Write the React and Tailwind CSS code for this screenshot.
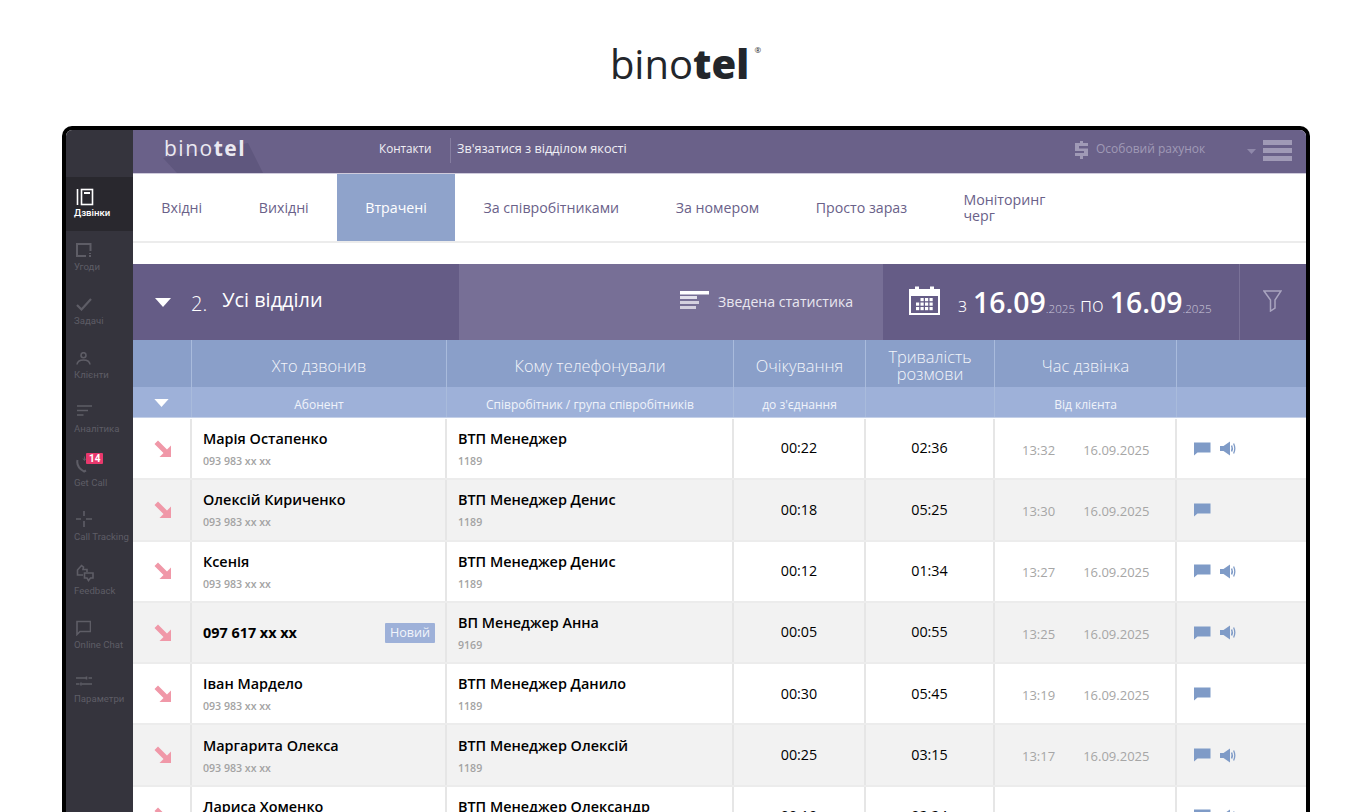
import React from "react";

const Arrow = () => (
  <svg width="18" height="18" viewBox="0 0 18 18" className="block">
    <path d="M0.5 4 L4 0.5 L13 9.5 L17 5.5 L17 17 L5.5 17 L9.5 13 Z" fill="#f098a8" />
  </svg>
);

const Chat = () => (
  <svg width="17" height="14" viewBox="0 0 17 14" className="block">
    <path d="M0 0.5 H16.5 V10.5 H3.5 L0 13.5 Z" fill="#7f9bc7" />
  </svg>
);

const Speaker = () => (
  <svg width="16" height="15" viewBox="0 0 16 15" className="block">
    <path d="M0 5 H3.5 L10 0.5 V14.5 L3.5 10 H0 Z" fill="#7f9bc7" />
    <path d="M11.6 4.5 Q13 7.5 11.6 10.5" stroke="#7f9bc7" strokeWidth="1.5" fill="none" />
    <path d="M13.6 2.5 Q16 7.5 13.6 12.5" stroke="#7f9bc7" strokeWidth="1.3" fill="none" />
  </svg>
);

const Tri = ({ w = 16, h = 9 }) => (
  <svg width={w} height={h} viewBox="0 0 16 9" className="block">
    <path d="M0 0 H16 L8 9 Z" fill="#fff" />
  </svg>
);

const S = { stroke: "#5e5d66", fill: "none", strokeWidth: 1.6 };

const navIcons = {
  calls: (
    <svg width="18" height="18" viewBox="0 0 18 18" fill="none" stroke="#fff" strokeWidth="1.6">
      <path d="M1.5 1 V17" />
      <rect x="5.5" y="1.5" width="11" height="15" />
      <path d="M8 5 H14" strokeWidth="2" />
    </svg>
  ),
  deals: (
    <svg width="16" height="14" viewBox="0 0 16 14" {...S} strokeWidth="2">
      <path d="M10 13 H1 V1 H14.5 V8" />
      <path d="M14 10 V11 M14 12 V14" />
    </svg>
  ),
  tasks: (
    <svg width="16" height="13" viewBox="0 0 16 13" {...S} strokeWidth="2.2">
      <path d="M1 7 L5.5 11.5 L15 1" />
    </svg>
  ),
  clients: (
    <svg width="15" height="13" viewBox="0 0 15 13" {...S}>
      <circle cx="7.5" cy="3.2" r="2.5" />
      <path d="M1 12.5 Q1.5 8 7.5 8 Q13.5 8 14 12.5" />
    </svg>
  ),
  analytics: (
    <svg width="16" height="12" viewBox="0 0 16 12" {...S}>
      <path d="M1 1 H16 M1 5.5 H12 M1 10 H7.5" />
    </svg>
  ),
  getcall: (
    <svg width="12" height="17" viewBox="0 0 12 17" {...S} strokeWidth="2">
      <path d="M1.5 4 Q0 11 8 15.5 L10 14.5" />
      <path d="M8.5 0.5 V4 M7 2.5 L8.5 4.5 L10 2.5" strokeWidth="1" />
    </svg>
  ),
  tracking: (
    <svg width="16" height="16" viewBox="0 0 16 16" {...S}>
      <path d="M8 0 V5 M8 10 V16 M0 8 H5 M10 8 H16" />
    </svg>
  ),
  feedback: (
    <svg width="18" height="20" viewBox="0 0 18 18" {...S}>
      <path d="M7 11 H1.5 V6 L5.5 1.5 L7.5 3 L7 5.5 H11 V8" />
      <path d="M8.5 9 H17 V14 H14.5 L12.5 16.5 L11 14 H8.5 Z" />
    </svg>
  ),
  chat: (
    <svg width="15" height="16" viewBox="0 0 15 15" {...S}>
      <path d="M1 1 H14.5 V11 H4 L1 14 Z" />
    </svg>
  ),
  params: (
    <svg width="16" height="10" viewBox="0 0 16 10" {...S}>
      <path d="M0 2 H10 M12.5 2 H16 M0 8 H3.5 M6 8 H16" />
      <path d="M10.5 0.5 V3.5 M5 6.5 V9.5" strokeWidth="1.6" />
    </svg>
  ),
};

const nav = [
  ["calls", "Дзвінки", "pb-0", true],
  ["deals", "Угоди", "pb-[3px]"],
  ["tasks", "Задачі", "pb-[3px]"],
  ["clients", "Клієнти", "pb-[3px]"],
  ["analytics", "Аналітика", "pb-[5px]"],
  ["getcall", "Get Call", "pb-[3px]"],
  ["tracking", "Call Tracking", "pb-[3px]"],
  ["feedback", "Feedback", "pb-[1px]"],
  ["chat", "Online Chat", "pb-[2px]"],
  ["params", "Параметри", "pb-[6px]"],
];

const tabs = [
  ["Вхідні"],
  ["Вихідні"],
  ["Втрачені", true],
  ["За співробітниками"],
  ["За номером"],
  ["Просто зараз"],
];

const rows = [
  ["Марія Остапенко", "ВТП Менеджер", "1189", "00:22", "02:36", "13:32", true],
  ["Олексій Кириченко", "ВТП Менеджер Денис", "1189", "00:18", "05:25", "13:30", false],
  ["Ксенія", "ВТП Менеджер Денис", "1189", "00:12", "01:34", "13:27", true],
  ["097 617 xx xx", "ВП Менеджер Анна", "9169", "00:05", "00:55", "13:25", true, true],
  ["Іван Мардело", "ВТП Менеджер Данило", "1189", "00:30", "05:45", "13:19", false],
  ["Маргарита Олекса", "ВТП Менеджер Олексій", "1189", "00:25", "03:15", "13:17", true],
  ["Лариса Хоменко", "ВТП Менеджер Олександр", "1189", "00:19", "02:24", "13:15", true],
];

const cols = "grid-cols-[59px_255px_287px_132px_129px_182px_129px]";

function Head({ children, last, extra = "" }) {
  return (
    <div className={`flex items-center justify-center text-center ${last ? "" : "border-r border-[#a9bbdc]"} ${extra}`}>
      {children}
    </div>
  );
}

function Row({ r, i }) {
  const [name, dest, ext, wait, dur, time, sound, isNew] = r;
  const bg = i % 2 ? "bg-[#f2f2f2]" : "bg-white";
  const cell = "border-r-2 border-[#e6e6e6]";
  return (
    <div className={`grid ${cols} h-[61.3px] shrink-0 border-b-2 border-[#ececec] ${bg}`}>
      <div className={`${cell} flex items-center justify-center pl-[2px]`}><Arrow /></div>
      <div className={`${cell} flex items-center justify-between pl-[11px] pr-[10px]`}>
        {isNew ? (
          <>
            <span className="text-[14.4px] font-bold text-black">{name}</span>
            <span className="bg-[#9eb1d9] text-[#f3f5fb] text-[12.6px] leading-[20px] px-[5px] rounded-[1px]">Новий</span>
          </>
        ) : (
          <div className="flex flex-col">
            <span className="text-[14.4px] leading-[20px] font-semibold text-black">{name}</span>
            <span className="text-[10.6px] leading-[14px] mt-[5px] font-semibold text-[#a3a3a3]">093 983 xx xx</span>
          </div>
        )}
      </div>
      <div className={`${cell} flex flex-col justify-center pl-[11px]`}>
        <span className="text-[14.4px] leading-[20px] font-semibold text-black">{dest}</span>
        <span className="text-[10.6px] leading-[14px] mt-[5px] font-semibold text-[#a3a3a3]">{ext}</span>
      </div>
      <div className={`${cell} flex items-center justify-center text-[14.3px] text-black pb-[1px]`}>{wait}</div>
      <div className={`${cell} flex items-center justify-center text-[14.3px] text-black pb-[1px]`}>{dur}</div>
      <div className={`${cell} flex items-center text-[13px] text-[#a6a6a6] pl-[27px] gap-[28px] pt-[4px]`}>
        <span>{time}</span>
        <span>16.09.2025</span>
      </div>
      <div className="flex items-center gap-[9px] pl-[17px]">
        <Chat />
        {sound && <Speaker />}
      </div>
    </div>
  );
}

export default function App() {
  return (
    <div className="h-[812px] w-[1372px] overflow-hidden bg-white font-['Open_Sans',sans-serif]">
      <div className="h-[126px] flex justify-center items-start pt-[34px] pr-[13px]">
        <div className="relative flex text-[#23262b] text-[40px] leading-[60px]">
          <span className="font-medium">bino</span>
          <span className="font-extrabold">tel</span>
          <span className="absolute right-[-12px] top-[11px] text-[8px] leading-[10px] font-normal">®</span>
        </div>
      </div>

      <div className="mx-[62px] h-[686px] rounded-t-[10px] border-x-4 border-t-4 border-black flex overflow-hidden">
        <aside className="w-[67px] shrink-0 bg-[#35343d] pt-[47px] font-['Roboto',sans-serif]">
          {nav.map(([k, label, pb, active]) => (
            <div key={k} className={`relative h-[54px] pl-[8px] flex flex-col ${active ? "bg-[#29282e] text-white font-medium" : "text-[#5e5d66]"}`}>
              <div className={`h-[29px] flex items-end pl-[2px] ${pb}`}>{navIcons[k]}</div>
              <div className="text-[9.6px] leading-[14px] whitespace-nowrap">{label}</div>
              {k === "getcall" && (
                <span className="absolute left-[20px] top-[6px] bg-[#e8386c] text-white text-[10px] leading-[11px] font-bold px-[3px] rounded-[1px]">14</span>
              )}
            </div>
          ))}
        </aside>

        <main className="flex-1 min-w-0 flex flex-col">
          <header className="relative h-[43px] shrink-0 bg-[#6a6189] flex items-center text-white">
            <div className="absolute left-[30px] top-[13px] h-[30px] w-[100px] bg-[#5f577e] [clip-path:polygon(0_50%,85%_0,100%_100%,14%_100%)]" />
            <div className="relative w-[246px] pl-[31px] text-[21px] leading-[26px] tracking-[1.5px] text-[#ebe9f1] shrink-0 pb-[7px]">
              <span className="font-normal">bino</span><span className="font-bold">tel</span>
            </div>
            <span className="text-[11.7px] text-[#f0eff5] w-[71px] shrink-0 pb-[5px]">Контакти</span>
            <span className="h-[25px] w-px bg-[#857da0] shrink-0 mb-[3px]" />
            <span className="text-[12.7px] text-[#f0eff5] pl-[6px] pb-[5px]">Зв'язатися з відділом якості</span>
            <div className="ml-auto flex items-center pr-[14px] pb-[3px]">
              <svg width="13" height="18" viewBox="0 0 13 18" className="mr-[8px]">
                <path d="M5 0 H8 V2 H13 V5 H4 V7.5 H13 V15 H8 V18 H5 V15 H0 V12 H9 V10 H0 V2 H5 Z" fill="#a09ab6" />
              </svg>
              <span className="text-[12px] text-[#a09ab6] w-[151px] pb-[2px]">Особовий рахунок</span>
              <svg width="9" height="5" viewBox="0 0 9 5" className="mr-[7px] mt-[2px]"><path d="M0 0 H9 L4.5 5 Z" fill="#8f88aa" /></svg>
              <div className="flex flex-col gap-[3px]">
                <div className="w-[29px] h-[5px] bg-[#a09ab6]" />
                <div className="w-[29px] h-[5px] bg-[#a09ab6]" />
                <div className="w-[29px] h-[5px] bg-[#a09ab6]" />
              </div>
            </div>
          </header>

          <nav className="h-[70px] shrink-0 border-t border-[#cfcbdc] border-b-2 border-b-[#ececec] flex bg-white text-[14.2px] text-[#6a6189]">
            {tabs.map(([t, active]) => (
              <div key={t} className={`px-[28.3px] flex items-center whitespace-nowrap ${active ? "bg-[#8fa3cb] text-white" : ""}`}>{t}</div>
            ))}
            <div className="pl-[28px] w-[120px] flex items-center leading-[16px]">Моніторинг черг</div>
          </nav>

          <div className="h-[21px] shrink-0 bg-white" />

          <section className="h-[76px] shrink-0 bg-[#655c86] flex text-white">
            <div className="w-[326px] flex items-center pl-[22px] shrink-0">
              <Tri />
              <span className="text-[20px] ml-[20px] pt-[4px] font-light">2.</span>
              <span className="text-[19.9px] ml-[15px] pb-[4px]">Усі відділи</span>
            </div>
            <div className="w-[424px] bg-[#776f96] flex items-center justify-end pr-[30px] shrink-0">
              <svg width="29" height="19" viewBox="0 0 29 19" className="mr-[9px] mb-[3px]">
                <g fill="#e4e2ec">
                  <rect x="0" y="0" width="29" height="3.5" fill="#fff" />
                  <rect x="0" y="5" width="17" height="3" />
                  <rect x="0" y="10" width="19" height="3" opacity=".85" />
                  <rect x="0" y="15" width="16" height="3" opacity=".85" />
                </g>
              </svg>
              <span className="text-[14.1px] text-[#e9e7f0]">Зведена статистика</span>
            </div>
            <div className="flex-1 flex items-center pl-[26px] border-r border-[#7a7298]">
              <svg width="31" height="29" viewBox="0 0 31 29" className="mr-[18px] mb-[3px]">
                <path fillRule="evenodd" fill="#fff" d="M0 3 H6 V0.5 H10 V3 H21 V0.5 H25 V3 H31 V29 H0 Z M2 10 V27 H29 V10 Z" />
                <g fill="#fff">
                  {[0, 1, 2].map((y) =>
                    [0, 1, 2, 3].map((x) =>
                      x === 0 && y === 0 ? null : (
                        <rect key={`${x}-${y}`} x={7 + x * 4.5} y={12 + y * 4.5} width="3.2" height="3.2" />
                      )
                    )
                  )}
                </g>
              </svg>
              <span className="text-[20px] font-light pt-[5px]">з</span>
              <span className="text-[28.4px] font-semibold ml-[6px]">16.09</span>
              <span className="text-[11.6px] font-light text-[#cdc9dc] pt-[13px]">.2025</span>
              <span className="text-[20px] font-light pt-[5px] ml-[5px]">по</span>
              <span className="text-[28.4px] font-semibold ml-[6px]">16.09</span>
              <span className="text-[11.6px] font-light text-[#cdc9dc] pt-[13px]">.2025</span>
            </div>
            <div className="w-[66px] shrink-0 flex items-center justify-center pb-[3px] pr-[2px]">
              <svg width="19" height="22" viewBox="0 0 19 22" fill="none" stroke="#a9a4bf" strokeWidth="1.5">
                <path d="M1 1 H18 L12 10 V18 L7.5 21 V10 Z" />
              </svg>
            </div>
          </section>

          <div className={`grid ${cols} h-[47px] shrink-0 bg-[#8a9fc9] text-[#f3f5fa] text-[16.4px] font-light`}>
            <Head />
            <Head extra="pt-[5px]">Хто дзвонив</Head>
            <Head extra="pt-[5px]">Кому телефонували</Head>
            <Head extra="pt-[5px]">Очікування</Head>
            <Head extra="pt-[4px] leading-[16.5px]"><span>Тривалість<br />розмови</span></Head>
            <Head extra="pt-[5px]">Час дзвінка</Head>
            <Head last />
          </div>
          <div className={`grid ${cols} h-[31px] shrink-0 bg-[#9eb1d9] text-[#f0f3fa] text-[12px] border-b border-[#c4d0e8]`}>
            <Head extra="pr-[1px]"><span className="pt-[1px]"><Tri w={15} h={8} /></span></Head>
            <Head extra="pt-[5px]">Абонент</Head>
            <Head extra="pt-[5px]">Співробітник / група співробітників</Head>
            <Head extra="pt-[5px]">до з'єднання</Head>
            <Head />
            <Head extra="pt-[5px]">Від клієнта</Head>
            <Head last />
          </div>

          <div className="flex-1 min-h-0 overflow-hidden flex flex-col pt-[1px]">
            {rows.map((r, i) => <Row key={i} r={r} i={i} />)}
          </div>
        </main>
      </div>
    </div>
  );
}
